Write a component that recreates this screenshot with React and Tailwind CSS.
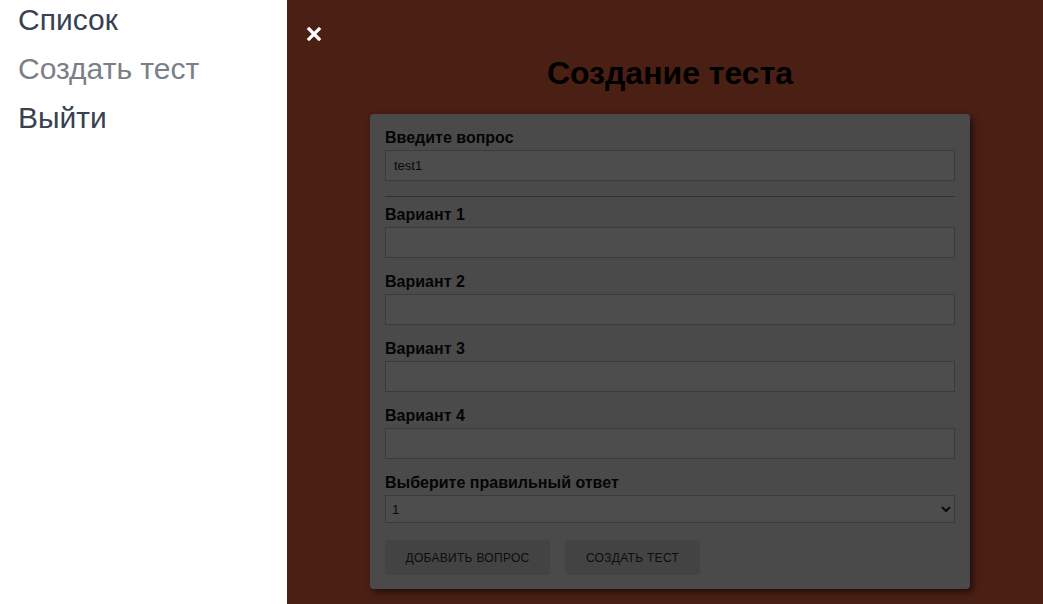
import { useState } from "react";

const fieldClass =
  "w-full h-[31px] border border-[#3a3a3a] bg-[#4d4d4d] px-2 text-[13px] text-[#0a0a0a] outline-none";

function Field({ label, value, onChange, className }) {
  return (
    <div className={className}>
      <label className="block text-[16px] leading-[21px] font-bold text-[#050505] mb-[2px]">
        {label}
      </label>
      <input type="text" value={value} onChange={onChange} className={fieldClass} />
    </div>
  );
}

export default function App() {
  const [question, setQuestion] = useState("test1");
  const [variants, setVariants] = useState(["", "", "", ""]);
  const [answer, setAnswer] = useState("1");

  const onChangeVariant = (index, event) => {
    const next = [...variants];
    next[index] = event.target.value;
    setVariants(next);
  };

  return (
    <div className="flex h-[604px] w-full font-['Liberation_Sans',Arial,sans-serif]">
      <nav className="w-[287px] shrink-0 bg-white pl-[18px] pt-[2px]">
        <a className="block h-[49px] text-[30px] leading-[36px] text-[#374151]">Список</a>
        <a className="block h-[49px] text-[30px] leading-[36px] text-[#7b7f88]">Создать тест</a>
        <a className="block h-[49px] text-[30px] leading-[36px] text-[#374151]">Выйти</a>
      </nav>

      <main className="flex-1 bg-[#4a1f14] flex flex-col">
        <div className="pt-[26px] pl-[19px]">
          <svg width="16" height="16" viewBox="0 0 16 16">
            <path d="M3 3 L13 13 M13 3 L3 13" stroke="white" strokeWidth="3.2" strokeLinecap="square" />
          </svg>
        </div>

        <div className="pl-[10px] flex flex-col items-center">
          <h1 className="mt-[13px] text-[32px] leading-[36px] font-bold text-black">
            Создание теста
          </h1>

          <div className="mt-[23px] w-[600px] rounded-[4px] bg-[#4a4a4a] px-[15px] pt-[13px] pb-[14px] shadow-[3px_3px_6px_rgba(0,0,0,0.55)]">
            <Field label="Введите вопрос" value={question} onChange={e => setQuestion(e.target.value)} />

            <hr className="mt-[15px] mb-[7px] border-0 border-t border-[#333]" />

            {variants.map((v, i) => (
              <Field
                key={i}
                label={`Вариант ${i + 1}`}
                value={v}
                onChange={e => onChangeVariant(i, e)}
                className={i === 0 ? "" : "mt-[13px]"}
              />
            ))}

            <div className="mt-[13px]">
              <label className="block text-[16px] leading-[21px] font-bold text-[#050505] mb-[2px]">
                Выберите правильный ответ
              </label>
              <select
                value={answer}
                onChange={e => setAnswer(e.target.value)}
                className="w-full h-[28px] border border-[#3a3a3a] bg-[#4d4d4d] pl-[2px] text-[13px] text-[#0a0a0a] outline-none"
              >
                <option value="1">1</option>
                <option value="2">2</option>
                <option value="3">3</option>
                <option value="4">4</option>
              </select>
            </div>

            <div className="mt-[17px] flex gap-[15px]">
              <button className="h-[35px] w-[165px] rounded-[4px] bg-[#434343] text-[12px] font-medium uppercase tracking-[0.3px] text-[#0d0d0d]">
                Добавить вопрос
              </button>
              <button className="h-[35px] w-[135px] rounded-[4px] bg-[#434343] text-[12px] font-medium uppercase tracking-[0.3px] text-[#0d0d0d]">
                Создать тест
              </button>
            </div>
          </div>
        </div>
      </main>
    </div>
  );
}
